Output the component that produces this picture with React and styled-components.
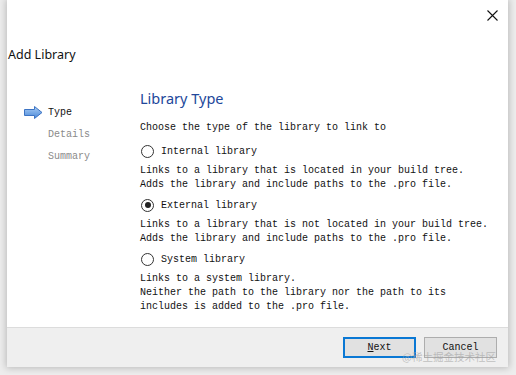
import React from 'react';
import styled, { createGlobalStyle } from 'styled-components';

const GlobalStyle = createGlobalStyle`
  html, body {
    margin: 0;
    padding: 0;
    background: #ededed;
  }
  #root {
    width: 516px;
    height: 375px;
    overflow: hidden;
  }
`;

const mono = `"Liberation Mono", "DejaVu Sans Mono", monospace`;
const sans = `"Noto Sans", "Open Sans", "Liberation Sans", sans-serif`;

const types = [
  {
    key: 'internal',
    label: 'Internal library',
    lines: [
      'Links to a library that is located in your build tree.',
      'Adds the library and include paths to the .pro file.',
    ],
  },
  {
    key: 'external',
    label: 'External library',
    checked: true,
    lines: [
      'Links to a library that is not located in your build tree.',
      'Adds the library and include paths to the .pro file.',
    ],
  },
  {
    key: 'system',
    label: 'System library',
    lines: [
      'Links to a system library.',
      'Neither the path to the library nor the path to its',
      'includes is added to the .pro file.',
    ],
  },
];

const steps = [
  { name: 'Type', active: true },
  { name: 'Details' },
  { name: 'Summary' },
];

function StepArrow() {
  return (
    <svg width="19" height="13" viewBox="0 0 19 13">
      <defs>
        <linearGradient id="arrowFill" x1="0" y1="0" x2="0" y2="1">
          <stop offset="0" stopColor="#a9cdf5" />
          <stop offset="1" stopColor="#4a88d8" />
        </linearGradient>
      </defs>
      <polygon
        points="0.5,3.5 10.5,3.5 10.5,0.5 18,6.5 10.5,12.5 10.5,9.5 0.5,9.5"
        fill="url(#arrowFill)"
        stroke="#3d74c4"
        strokeWidth="1"
      />
    </svg>
  );
}

function CloseIcon() {
  return (
    <svg width="11" height="11" viewBox="0 0 11 11">
      <path d="M0.5 0.5 L10.5 10.5 M10.5 0.5 L0.5 10.5" stroke="#111" strokeWidth="1.1" />
    </svg>
  );
}

function App() {
  return (
    <>
      <GlobalStyle />
      <Page>
        <Dialog>
          <TopBar>
            <CloseButton aria-label="Close">
              <CloseIcon />
            </CloseButton>
          </TopBar>
          <Heading>Add Library</Heading>
          <Body>
            <Sidebar>
              {steps.map((s) => (
                <Step key={s.name} active={s.active}>
                  <ArrowSlot>{s.active && <StepArrow />}</ArrowSlot>
                  {s.name}
                </Step>
              ))}
            </Sidebar>
            <Content>
              <Title>Library Type</Title>
              <Intro>Choose the type of the library to link to</Intro>
              {types.map((t) => (
                <Option key={t.key}>
                  <RadioRow>
                    <Radio checked={t.checked} />
                    {t.label}
                  </RadioRow>
                  <Desc>
                    {t.lines.map((l) => (
                      <div key={l}>{l}</div>
                    ))}
                  </Desc>
                </Option>
              ))}
            </Content>
          </Body>
          <Footer>
            <Button primary>
              <u>N</u>ext
            </Button>
            <Button>Cancel</Button>
          </Footer>
          <Watermark>@稀土掘金技术社区</Watermark>
        </Dialog>
      </Page>
    </>
  );
}

export default App;

const Page = styled.div`
  width: 516px;
  height: 375px;
  padding-left: 7px;
  box-sizing: border-box;
`;

const Dialog = styled.div`
  position: relative;
  width: 501px;
  height: 367px;
  background: #fff;
  box-shadow: 0 0 7px 1px rgba(0, 0, 0, 0.22);
  display: flex;
  flex-direction: column;
`;

const TopBar = styled.div`
  height: 30px;
  display: flex;
  justify-content: flex-end;
  align-items: center;
  padding-right: 10px;
`;

const CloseButton = styled.div`
  width: 11px;
  height: 11px;
  margin-top: 1px;
  display: flex;
`;

const Heading = styled.div`
  height: 48px;
  line-height: 50px;
  padding-left: 1px;
  font-family: ${sans};
  font-size: 12.5px;
  color: #111;
`;

const Body = styled.div`
  flex: 1;
  display: flex;
`;

const Sidebar = styled.div`
  width: 132px;
  padding-top: 23px;
  box-sizing: border-box;
`;

const Step = styled.div`
  display: flex;
  align-items: center;
  height: 22px;
  font-family: ${mono};
  font-size: 10px;
  color: ${(p) => (p.active ? '#111' : '#8a8a8a')};
`;

const ArrowSlot = styled.div`
  width: 24px;
  padding-left: 17px;
  display: flex;
  align-items: center;
`;

const Content = styled.div`
  flex: 1;
  padding-top: 9px;
  padding-left: 1px;
`;

const Title = styled.div`
  height: 22px;
  line-height: 22px;
  font-family: ${sans};
  font-size: 14.5px;
  color: #22479a;
`;

const Intro = styled.div`
  margin-top: 12px;
  line-height: 14px;
  font-family: ${mono};
  font-size: 10px;
  color: #111;
`;

const Option = styled.div`
  margin-top: 8px;
  & + & {
    margin-top: 5px;
  }
`;

const RadioRow = styled.div`
  display: flex;
  align-items: center;
  height: 16px;
  font-family: ${mono};
  font-size: 10px;
  color: #111;
`;

const Radio = styled.span`
  position: relative;
  width: 11px;
  height: 11px;
  margin-left: 1px;
  margin-right: 7px;
  border: 1px solid #333;
  border-radius: 50%;
  background: #fff;
  box-sizing: content-box;
  &::after {
    content: '';
    display: ${(p) => (p.checked ? 'block' : 'none')};
    position: absolute;
    left: 2.5px;
    top: 2.5px;
    width: 6px;
    height: 6px;
    border-radius: 50%;
    background: #222;
  }
`;

const Desc = styled.div`
  margin-top: 5px;
  line-height: 14px;
  font-family: ${mono};
  font-size: 10px;
  color: #111;
  white-space: pre;
`;

const Footer = styled.div`
  height: 40px;
  box-sizing: border-box;
  border-top: 1px solid #dcdcdc;
  background: #efefef;
  display: flex;
  justify-content: flex-end;
  align-items: flex-start;
  gap: 8px;
  padding: 9px 11px 0 0;
`;

const Button = styled.div`
  width: 73px;
  height: 21px;
  box-sizing: border-box;
  display: flex;
  align-items: center;
  justify-content: center;
  background: #e1e1e1;
  border: ${(p) => (p.primary ? '2px solid #0a78d4' : '1px solid #adadad')};
  font-family: ${mono};
  font-size: 10px;
  color: #111;
`;

const Watermark = styled.div`
  position: absolute;
  right: 12px;
  bottom: 3px;
  font-family: "Noto Sans CJK SC", sans-serif;
  font-size: 10.5px;
  color: rgba(160, 160, 160, 0.6);
`;
